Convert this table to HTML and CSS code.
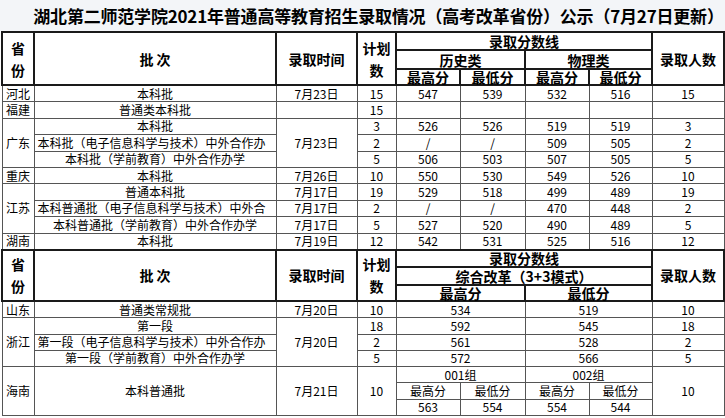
FILE: index.html
```html
<!DOCTYPE html>
<html lang="zh-CN">
<head>
<meta charset="utf-8">
<title>录取情况</title>
<link rel="stylesheet" href="styles.css">
</head>
<body>
<div class="sheet">
  <div class="title">湖北第二师范学院2021年普通高等教育招生录取情况（高考改革省份）公示（7月27日更新）</div>
  <table class="grid">
    <colgroup>
      <col class="c-prov"><col class="c-batch"><col class="c-date"><col class="c-plan">
      <col class="c-s1"><col class="c-s2"><col class="c-s3"><col class="c-s4"><col class="c-num">
    </colgroup>
    <tbody class="upper">
      <tr class="h h1">
        <th rowspan="3" class="tall">省<br>份</th>
        <th rowspan="3" class="tall">批 次</th>
        <th rowspan="3" class="tall">录取时间</th>
        <th rowspan="3" class="tall">计划<br>数</th>
        <th colspan="4">录取分数线</th>
        <th rowspan="3" class="tall">录取人数</th>
      </tr>
      <tr class="h h2">
        <th colspan="2">历史类</th>
        <th colspan="2">物理类</th>
      </tr>
      <tr class="h h3">
        <th>最高分</th><th>最低分</th><th>最高分</th><th>最低分</th>
      </tr>

      <tr><td>河北</td><td>本科批</td><td>7月23日</td><td>15</td><td>547</td><td>539</td><td>532</td><td>516</td><td>15</td></tr>
      <tr><td>福建</td><td>普通类本科批</td><td></td><td>15</td><td></td><td></td><td></td><td></td><td></td></tr>
      <tr><td rowspan="3">广东</td><td>本科批</td><td rowspan="3">7月23日</td><td>3</td><td>526</td><td>526</td><td>519</td><td>519</td><td>3</td></tr>
      <tr><td class="clip">本科批（电子信息科学与技术）中外合作办</td><td>2</td><td>/</td><td>/</td><td>509</td><td>505</td><td>2</td></tr>
      <tr><td>本科批（学前教育）中外合作办学</td><td>5</td><td>506</td><td>503</td><td>507</td><td>505</td><td>5</td></tr>
      <tr><td>重庆</td><td>本科批</td><td>7月26日</td><td>10</td><td>550</td><td>530</td><td>549</td><td>526</td><td>10</td></tr>
      <tr><td rowspan="3">江苏</td><td>普通本科批</td><td>7月17日</td><td>19</td><td>529</td><td>518</td><td>499</td><td>489</td><td>19</td></tr>
      <tr><td class="clip">本科普通批（电子信息科学与技术）中外合</td><td>7月17日</td><td>2</td><td>/</td><td>/</td><td>470</td><td>448</td><td>2</td></tr>
      <tr><td>本科普通批（学前教育）中外合作办学</td><td>7月17日</td><td>5</td><td>527</td><td>520</td><td>490</td><td>489</td><td>5</td></tr>
      <tr><td>湖南</td><td>本科批</td><td>7月19日</td><td>12</td><td>542</td><td>531</td><td>525</td><td>516</td><td>12</td></tr>
    </tbody>
    <tbody class="lower">
      <tr class="h h1b">
        <th rowspan="3" class="tall">省<br>份</th>
        <th rowspan="3" class="tall">批 次</th>
        <th rowspan="3" class="tall">录取时间</th>
        <th rowspan="3" class="tall">计划<br>数</th>
        <th colspan="4">录取分数线</th>
        <th rowspan="3" class="tall">录取人数</th>
      </tr>
      <tr class="h h2b">
        <th colspan="4">综合改革（3+3模式）</th>
      </tr>
      <tr class="h h3b">
        <th colspan="2">最高分</th><th colspan="2">最低分</th>
      </tr>

      <tr><td>山东</td><td>普通类常规批</td><td>7月20日</td><td>10</td><td colspan="2">534</td><td colspan="2">519</td><td>10</td></tr>
      <tr><td rowspan="3">浙江</td><td>第一段</td><td rowspan="3">7月20日</td><td>18</td><td colspan="2">592</td><td colspan="2">545</td><td>18</td></tr>
      <tr><td class="clip">第一段（电子信息科学与技术）中外合作办</td><td>2</td><td colspan="2">561</td><td colspan="2">528</td><td>2</td></tr>
      <tr><td>第一段（学前教育）中外合作办学</td><td>5</td><td colspan="2">572</td><td colspan="2">566</td><td>5</td></tr>
      <tr><td rowspan="3">海南</td><td rowspan="3">本科普通批</td><td rowspan="3">7月21日</td><td rowspan="3">10</td><td colspan="2">001组</td><td colspan="2">002组</td><td rowspan="3">10</td></tr>
      <tr><td>最高分</td><td>最低分</td><td>最高分</td><td>最低分</td></tr>
      <tr><td>563</td><td>554</td><td>554</td><td>544</td></tr>
    </tbody>
  </table>
</div>
</body>
</html>
```

FILE: styles.css
```css
html, body {
  margin: 0;
  padding: 0;
  background: #ffffff;
}

body {
  font-family: "Noto Sans CJK SC", "Noto Sans", sans-serif;
  color: #000;
}

.sheet {
  width: 725px;
}

.title {
  height: 31px;
  line-height: 31px;
  font-size: 17px;
  font-weight: bold;
  text-align: center;
  padding-left: 32px;
  white-space: nowrap;
  background: #f3f5f8;
  letter-spacing: -0.2px;
}

.grid {
  border-collapse: collapse;
  table-layout: fixed;
  width: 722px;
  margin-left: 1px;
  background: #fff;
}

.c-prov { width: 32px; }
.c-batch { width: 242px; }
.c-date { width: 81px; }
.c-plan { width: 39px; }
.c-s1 { width: 64px; }
.c-s2 { width: 65px; }
.c-s3 { width: 64px; }
.c-s4 { width: 63px; }
.c-num { width: 72px; }

.grid td {
  border: 1px solid #555;
  padding: 0;
  font-size: 12px;
  line-height: 14px;
  text-align: center;
  vertical-align: middle;
  white-space: nowrap;
  overflow: hidden;
}

.upper td { height: 15.4px; }
.lower td { height: 15.3px; }

.grid td.clip {
  text-align: left;
  padding-left: 3px;
}

.grid th {
  border: 2px solid #1a1a1a;
  padding: 0;
  font-size: 14px;
  font-weight: bold;
  line-height: 14px;
  text-align: center;
  vertical-align: middle;
  white-space: nowrap;
}

.grid th.tall {
  height: auto;
  line-height: 22px;
}

.h1 th { height: 16px; }
.h2 th { height: 17px; }
.h3 th { height: 14px; }
.h1b th { height: 15px; }
.h2b th { height: 16px; }
.h3b th { height: 14px; }
```
